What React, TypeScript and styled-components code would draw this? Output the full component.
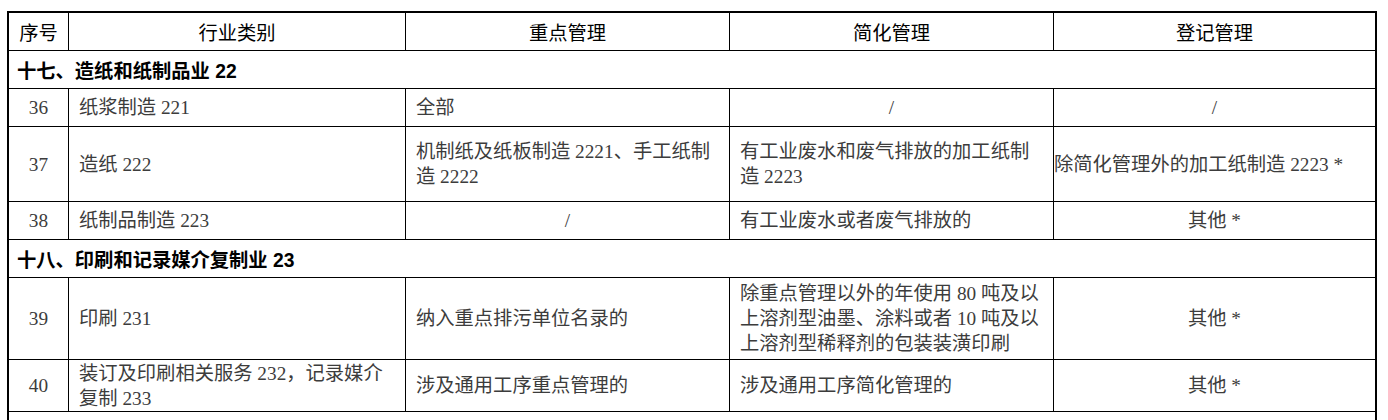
import React from "react";
import styled, { createGlobalStyle } from "styled-components";

const GlobalStyle = createGlobalStyle`
  html, body {
    margin: 0;
    padding: 0;
    background: #ffffff;
  }
  body {
    font-family: "Liberation Serif", "Noto Sans CJK SC", serif;
  }
  * { box-sizing: border-box; }
`;

const COLS = "60px 337px 324px 324px 321px";

const Page = styled.div`
  padding: 11px 0 0 7px;
`;

const Table = styled.div`
  display: flex;
  flex-direction: column;
  width: 1370px;
  border: 2px solid #000;
  border-bottom: none;
`;

const Row = styled.div<{ $h: number }>`
  display: grid;
  grid-template-columns: ${COLS};
  height: ${(p) => p.$h}px;
  border-bottom: 1px solid #000;
`;

const SectionRow = styled.div<{ $h: number }>`
  display: flex;
  align-items: center;
  height: ${(p) => p.$h}px;
  padding-left: 8px;
  border-bottom: 1px solid #000;
  font-family: "Liberation Sans", "Noto Sans CJK SC", sans-serif;
  font-weight: 700;
  font-size: 19.3px;
  color: #000;
`;

const HeadCell = styled.div`
  display: flex;
  align-items: center;
  justify-content: center;
  border-right: 1px solid #000;
  font-family: "Noto Sans CJK SC", "Liberation Sans", sans-serif;
  font-size: 19.3px;
  color: #000;
  &:last-child { border-right: none; }
`;

type Align = "left" | "center" | "flush";

const Cell = styled.div<{ $align: Align }>`
  display: flex;
  align-items: center;
  justify-content: ${(p) => (p.$align === "center" ? "center" : "flex-start")};
  text-align: ${(p) => (p.$align === "center" ? "center" : "left")};
  padding: ${(p) => (p.$align === "flush" ? "0" : "0 10px")};
  border-right: 1px solid #000;
  font-family: "Liberation Serif", "Noto Sans CJK SC", serif;
  font-size: 19.3px;
  line-height: 25px;
  color: #3c3c3c;
  &:last-child { border-right: none; }
`;

type CellData = { text: string; align?: Align };
type RowData =
  | { kind: "section"; h: number; title: string }
  | { kind: "item"; h: number; cells: CellData[] };

const headers = ["序号", "行业类别", "重点管理", "简化管理", "登记管理"];

const rows: RowData[] = [
  { kind: "section", h: 38, title: "十七、造纸和纸制品业 22" },
  {
    kind: "item",
    h: 38,
    cells: [
      { text: "36", align: "center" },
      { text: "纸浆制造 221" },
      { text: "全部" },
      { text: "/", align: "center" },
      { text: "/", align: "center" },
    ],
  },
  {
    kind: "item",
    h: 75,
    cells: [
      { text: "37", align: "center" },
      { text: "造纸 222" },
      { text: "机制纸及纸板制造 2221、手工纸制造 2222" },
      { text: "有工业废水和废气排放的加工纸制造 2223" },
      { text: "除简化管理外的加工纸制造 2223 *", align: "flush" },
    ],
  },
  {
    kind: "item",
    h: 38,
    cells: [
      { text: "38", align: "center" },
      { text: "纸制品制造 223" },
      { text: "/", align: "center" },
      { text: "有工业废水或者废气排放的" },
      { text: "其他 *", align: "center" },
    ],
  },
  { kind: "section", h: 38, title: "十八、印刷和记录媒介复制业 23" },
  {
    kind: "item",
    h: 82,
    cells: [
      { text: "39", align: "center" },
      { text: "印刷 231" },
      { text: "纳入重点排污单位名录的" },
      {
        text: "除重点管理以外的年使用 80 吨及以上溶剂型油墨、涂料或者 10 吨及以上溶剂型稀释剂的包装装潢印刷",
      },
      { text: "其他 *", align: "center" },
    ],
  },
  {
    kind: "item",
    h: 52,
    cells: [
      { text: "40", align: "center" },
      { text: "装订及印刷相关服务 232，记录媒介复制 233" },
      { text: "涉及通用工序重点管理的" },
      { text: "涉及通用工序简化管理的" },
      { text: "其他 *", align: "center" },
    ],
  },
  { kind: "section", h: 40, title: "" },
];

export default function App() {
  return (
    <>
      <GlobalStyle />
      <Page>
        <Table>
          <Row $h={38}>
            {headers.map((h) => (
              <HeadCell key={h}>{h}</HeadCell>
            ))}
          </Row>
          {rows.map((r, i) =>
            r.kind === "section" ? (
              <SectionRow key={i} $h={r.h}>
                {r.title}
              </SectionRow>
            ) : (
              <Row key={i} $h={r.h}>
                {r.cells.map((c, j) => (
                  <Cell key={j} $align={c.align ?? "left"}>
                    {c.text}
                  </Cell>
                ))}
              </Row>
            )
          )}
        </Table>
      </Page>
    </>
  );
}
